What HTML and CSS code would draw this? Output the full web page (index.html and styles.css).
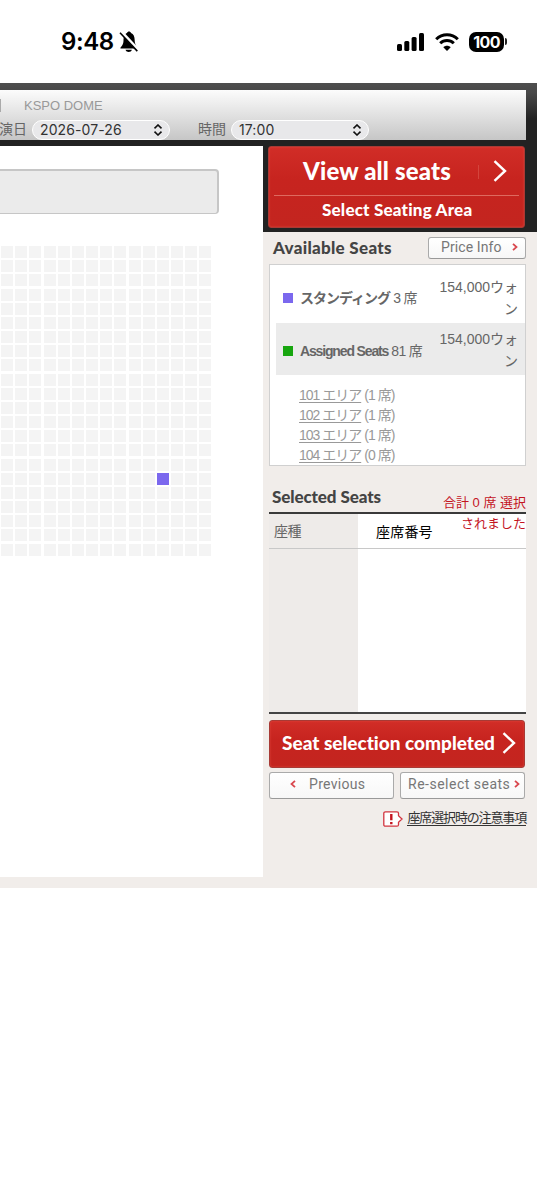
FILE: index.html
```html
<!DOCTYPE html>
<html lang="ja">
  <head>
    <meta charset="UTF-8" />
    <title>座席選択</title>
    <link rel="stylesheet" href="styles.css">
  </head>
  <body>
    <div class="status">
      <div class="clock">9:48</div>
      <svg class="bell" width="20" height="22" viewBox="0 0 20 22">
        <path d="M1.400 17.500c.2-2 3.100-3 3.100-8C4.500 5 6.300 2.700 8 2c.6-2 3.400-2 4 0 2.500.8 3.700 3.500 3.700 7.500 0 4.500 2.500 6 2.600 8z" />
        <path d="M6.500 18.700h6.400c-.8 2.900-5.600 2.900-6.400 0z" />
        <path d="M2.300.8l17 18.400" stroke="#fff" stroke-width="3.200" />
        <path d="M1 1.700l17.300 18.400" stroke="#000" stroke-width="1.600" />
      </svg>
      <svg class="signal" width="27" height="18" viewBox="0 0 27 18">
        <rect x="0" y="11" width="5" height="7" rx="1.500" />
        <rect x="7.300" y="8" width="5" height="10" rx="1.500" />
        <rect x="14.600" y="4" width="5" height="14" rx="1.500" />
        <rect x="22" y="0" width="5" height="18" rx="1.500" />
      </svg>
      <svg class="wifi" width="24" height="18" viewBox="0 0 24 18">
        <g fill="none" stroke="#000" stroke-width="3">
          <path d="M1.200 6.200C7.200.2 16.800.2 22.800 6.200" />
          <path d="M5.200 10.300c3.900-3.800 9.700-3.800 13.600 0" />
        </g>
        <path d="M12 18l-3.700-3.800c2-2 5.400-2 7.400 0z" />
      </svg>
      <div class="battery">100</div>
      <div class="cap"></div>
    </div>

    <div class="app">
      <div class="top">
        <div class="info">
          <div class="venue"><i></i>KSPO DOME</div>
          <div class="pick">
            <label class="lb-date">演日</label>
            <div class="select">2026-07-26
              <svg width="10" height="12" viewBox="0 0 10 12"><path d="M1.500 4.300L5 1l3.500 3.300M1.500 7.700L5 11l3.500-3.300" /></svg>
            </div>
            <label class="lb-time">時間</label>
            <div class="select">17:00
              <svg width="10" height="12" viewBox="0 0 10 12"><path d="M1.500 4.300L5 1l3.500 3.300M1.500 7.700L5 11l3.500-3.300" /></svg>
            </div>
          </div>
        </div>
      </div>

      <div class="main">
        <div class="map">
          <div class="stage"></div>
          <div class="seats" id="seats"></div>
        </div>

        <div class="side">
          <div class="view">
            <div class="red viewall">
              <div class="row1">
                <span class="t-view">View all seats</span>
                <i class="bar"></i>
                <svg width="14" height="22" viewBox="0 0 14 22"><path d="M1.500 1.200L12 11 1.500 20.800" /></svg>
              </div>
              <div class="row2"><span>Select Seating Area</span></div>
            </div>
          </div>

          <div class="panel">
            <div class="head">
              <h2>Available Seats</h2>
              <div class="btn price"><span>Price Info</span>
                <svg width="6" height="8" viewBox="0 0 6 8"><path d="M1 .8L4.500 4 1 7.200" /></svg>
              </div>
            </div>

            <div class="list">
              <div class="item">
                <i class="chip purple"></i>
                <div class="name"><b class="jp">スタンディング</b> 3 席</div>
                <div class="won">154,000ウォン</div>
              </div>
              <div class="item gray">
                <i class="chip green"></i>
                <div class="name"><b class="en">Assigned Seats</b> 81 席</div>
                <div class="won">154,000ウォン</div>
              </div>
              <ul class="areas">
                <li><a>101 エリア</a> (1 席)</li>
                <li><a>102 エリア</a> (1 席)</li>
                <li><a>103 エリア</a> (1 席)</li>
                <li><a>104 エリア</a> (0 席)</li>
              </ul>
            </div>

            <div class="selhead">
              <h2>Selected Seats</h2>
              <div class="total">合計 0 席 選択されました</div>
            </div>
            <div class="table">
              <div class="th">座種</div>
              <div class="th num">座席番号</div>
              <div class="td"></div>
              <div class="td num"></div>
            </div>

            <div class="red done">
              <span class="t-done">Seat selection completed</span>
              <svg width="14" height="22" viewBox="0 0 14 22"><path d="M1.500 1.200L12 11 1.500 20.800" /></svg>
            </div>
            <div class="btns">
              <div class="btn prev">
                <svg width="6" height="8" viewBox="0 0 6 8"><path d="M5 .8L1.500 4 5 7.200" /></svg>
                <span>Previous</span>
              </div>
              <div class="btn again">
                <span>Re-select seats</span>
                <svg width="6" height="8" viewBox="0 0 6 8"><path d="M1 .8L4.500 4 1 7.200" /></svg>
              </div>
            </div>
            <div class="note">
              <svg width="20" height="16" viewBox="0 0 20 16">
                <path d="M2.500.8h11.500q1.500 0 1.500 1.500v2.500L19 8l-3.500 3.200v2.500q0 1.500-1.500 1.500H2.500Q.8 15.200.8 13.700V2.300Q.8.8 2.500.8z" fill="#fff" stroke="#d2343f" stroke-width="1.300" />
                <path d="M8.300 3v6.300M8.300 11v2.200" stroke="#c4141f" stroke-width="2.400" />
              </svg>
              <a>座席選択時の注意事項</a>
            </div>
          </div>
        </div>
      </div>
    </div>

    <script>
      const seats = document.getElementById("seats");
      const cols = 15;
      const rows = 22;
      const open = 16 * cols + 11;

      for (let i = 0; i < cols * rows; i++) {
        const seat = document.createElement("i");
        if (i === open) seat.className = "open";
        seats.appendChild(seat);
      }
    </script>
  </body>
</html>
```
FILE: styles.css
```css
* {
  box-sizing: border-box;
}
html {
  background: #fff;
}
body {
  margin: 0;
  width: 554px;
  height: 1200px;
  overflow: hidden;
  background: #fff;
  font-family: "Liberation Sans", "Noto Sans CJK JP", sans-serif;
  color: #666;
}
h2 {
  margin: 0;
}
i {
  display: block;
}
.status {
  display: flex;
  align-items: center;
  height: 83px;
  padding-left: 61px;
  color: #000;
}
.clock {
  width: 58px;
  font: 600 24px/24px Inter, sans-serif;
  letter-spacing: -0.4px;
  white-space: nowrap;
}
.bell {
  margin-top: 1px;
}
.signal {
  margin-left: 258px;
}
.wifi {
  margin-left: 11px;
}
.battery {
  width: 35px;
  height: 20px;
  margin-left: 10px;
  border-radius: 7px;
  background: #000;
  color: #fff;
  font: 700 16px/20px Inter, sans-serif;
  letter-spacing: -0.6px;
  text-align: center;
}
.cap {
  width: 2px;
  height: 7px;
  margin-left: 1px;
  border-radius: 0 2px 2px 0;
  background: #222;
}

/* 上部バー */
.app {
  width: 537px;
  height: 805px;
  background: #f1edea;
}
.top {
  height: 63px;
  padding: 7px 11px 6px 0;
  background: linear-gradient(#4e4e4e, #484848 10px, #222 36px);
}
.info {
  height: 50px;
  background: linear-gradient(#fcfcfc, #c6c6c6);
}
.venue {
  display: flex;
  align-items: center;
  height: 29px;
  padding-top: 2px;
  font-size: 13px;
  color: #999;
}
.venue i {
  width: 1px;
  height: 13px;
  margin-right: 23px;
  background: #aaa;
}
.pick {
  display: flex;
  align-items: center;
  height: 21px;
  font-size: 14px;
  line-height: 20px;
}
.lb-date,
.lb-time {
  margin-top: -2px;
}
.lb-date {
  width: 33px;
  margin-left: -1px;
}
.lb-time {
  width: 33px;
  margin-left: 28px;
}
.select {
  display: flex;
  align-items: center;
  justify-content: space-between;
  width: 138px;
  height: 20px;
  padding: 1px 6px 0 7px;
  border: 1px solid #fff;
  border-radius: 10px;
  background: #e8e8ea;
  color: #333;
  font: 14px/18px Inter, sans-serif;
  letter-spacing: 0.1px;
}
.select svg {
  fill: none;
  stroke: #111;
  stroke-width: 1.6;
}

/* 座席図 */
.main {
  display: flex;
  height: 731px;
}
.map {
  width: 263px;
  padding-top: 23px;
  background: #fff;
}
.stage {
  width: 219px;
  height: 45px;
  border: 1px solid #c6c6c6;
  border-width: 2px 2px 1px 0;
  border-radius: 0 4px 4px 0;
  background: #ebebeb;
}
.seats {
  display: grid;
  grid-template-columns: repeat(15, 12px);
  grid-auto-rows: 12px;
  gap: 2.18px;
  margin: 32px 0 0 1px;
}
.seats i {
  background: #f4f4f4;
}
.seats .open {
  background: #7b68ee;
}

/* 右側 */
.side {
  width: 274px;
}
.view {
  height: 86px;
  padding: 0 12px 0 5px;
  background: #222;
}
.red {
  border: 1px solid #a83a35;
  border-radius: 3px;
  background: linear-gradient(#d12d27, #c7241f 40%, #c3251f);
  box-shadow: inset 0 0 2px #e34a40;
  color: #fff;
  font-family: Lato, sans-serif;
  font-weight: 900;
  font-variant-ligatures: none;
  white-space: nowrap;
}
.red svg {
  fill: none;
  stroke: #fff;
  stroke-width: 2.4;
}
.viewall {
  height: 82px;
  padding: 0 5px;
}
.row1 {
  display: flex;
  align-items: center;
  height: 49px;
  padding-left: 29px;
  border-bottom: 1px solid #de6a5f;
}
.t-view {
  width: 175px;
  font-size: 24px;
  line-height: 30px;
  letter-spacing: 0.15px;
}
.bar {
  width: 1px;
  height: 14px;
  margin: 2px 14px 0 0;
  background: #d4453d;
}
.row2 {
  padding: 4px 0 0 48px;
  font-size: 17px;
  line-height: 20px;
  letter-spacing: 0.2px;
}
.panel {
  width: 263px;
  padding: 3px 0 0 6px;
}
.head {
  display: flex;
  justify-content: space-between;
  height: 29px;
  padding-left: 4px;
}
.head h2,
.selhead h2 {
  font: 900 17px/26px Lato, sans-serif;
  color: #444;
  white-space: nowrap;
}
.head h2 {
  letter-spacing: 0.3px;
}
.btn {
  display: flex;
  align-items: center;
  border: 1px solid #aaa;
  border-bottom-color: #999;
  border-radius: 3px;
  background: linear-gradient(#fff, #f7f7f7);
  color: #777;
  font: 14px/18px Roboto, sans-serif;
  white-space: nowrap;
}
.btn svg {
  fill: none;
  stroke: #d9474e;
  stroke-width: 1.8;
}
.price {
  width: 98px;
  height: 22px;
  margin-top: 2px;
  padding: 0 0 2px 12px;
}
.price span {
  width: 71px;
  letter-spacing: 0.1px;
}
.list {
  height: 202px;
  padding: 2px 0 0 6px;
  border: 1px solid #d0d0d0;
  background: #fff;
  overflow: hidden;
}
.item {
  display: flex;
  align-items: center;
  height: 56px;
  padding: 4px 0 0 7px;
}
.gray {
  height: 52px;
  padding-top: 1px;
  background: #ebebeb;
}
.chip {
  width: 10px;
  height: 10px;
  margin: 2px 7px 0 0;
}
.purple {
  background: #7b68ee;
}
.green {
  background: #17a60f;
}
.name {
  width: 134px;
  font-size: 14px;
  letter-spacing: -0.7px;
  white-space: nowrap;
}
.jp {
  letter-spacing: -1px;
}
.en {
  letter-spacing: -1.15px;
}
.won {
  width: 84px;
  margin-top: 1px;
  font-size: 14px;
  line-height: 22px;
  text-align: right;
  word-break: break-all;
}
.areas {
  margin: 10px 0 0;
  padding: 0 0 0 23px;
  list-style: none;
  font-size: 14px;
  line-height: 20px;
  letter-spacing: -1.05px;
  word-spacing: 0.3px;
  color: #999;
}
.areas a {
  text-decoration: underline;
  text-decoration-skip-ink: none;
  text-underline-offset: 2px;
}
.selhead {
  display: flex;
  justify-content: space-between;
  height: 48px;
  padding: 18px 0 0 3px;
  border-bottom: 2px solid #3a3a3a;
}
.selhead h2 {
  letter-spacing: -0.1px;
}
.total {
  position: relative;
  z-index: 1;
  width: 86px;
  height: 42px;
  margin-top: 8px;
  font-size: 13px;
  line-height: 21px;
  text-align: right;
  color: #c4141f;
}
.table {
  display: grid;
  grid-template-columns: 89px 1fr;
  grid-template-rows: 35px 163px;
  border-bottom: 2px solid #444;
}
.th {
  padding: 7px 0 0 5px;
  border-bottom: 1px solid #c8c8c8;
  background: #eeebe9;
  font-size: 14px;
  line-height: 20px;
  letter-spacing: -0.6px;
}
.td {
  background: #eeebe9;
}
.table .num {
  padding-left: 18px;
  background: #fff;
  color: #000;
  letter-spacing: 0.2px;
}
.th.num {
  padding-top: 8px;
}
.done {
  display: flex;
  align-items: center;
  width: 256px;
  height: 48px;
  margin-top: 6px;
  padding: 0 0 3px 12px;
}
.t-done {
  width: 220px;
  font-size: 19px;
}
.btns {
  display: flex;
  gap: 6px;
  margin-top: 4px;
}
.prev {
  width: 125px;
  height: 27px;
  padding: 0 0 3px 20px;
}
.prev span {
  margin-left: 13px;
  letter-spacing: 0.3px;
}
.again {
  width: 125px;
  height: 27px;
  padding: 0 0 3px 7px;
}
.again span {
  width: 106px;
  letter-spacing: 0.5px;
}
.note {
  display: flex;
  align-items: center;
  justify-content: flex-end;
  height: 20px;
  margin-top: 10px;
  font-size: 13px;
  line-height: 15px;
  letter-spacing: -1.15px;
  color: #333;
}
.note svg {
  margin-right: 4px;
  fill: none;
}
.note a {
  margin-top: -2px;
  border-bottom: 1px solid #333;
}
```
